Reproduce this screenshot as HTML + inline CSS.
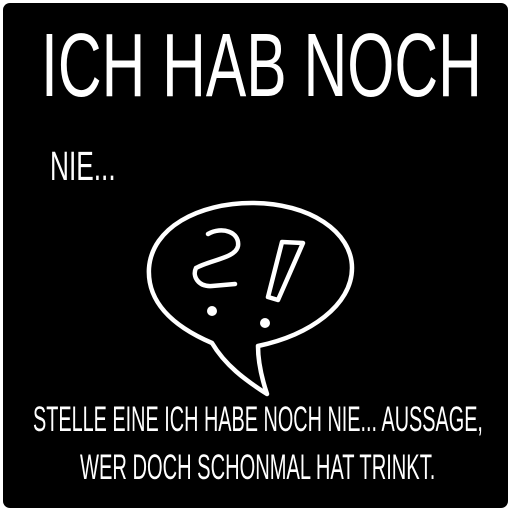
<!DOCTYPE html>
<html><head><style>
html,body{margin:0;padding:0;background:#fff;width:512px;height:512px;overflow:hidden}
.box{position:absolute;left:3px;top:3px;width:505px;height:505px;background:#000;border-radius:7px}
.t{position:absolute;color:#fff;font-family:"Liberation Sans",sans-serif;white-space:nowrap;transform-origin:0 0;line-height:1}
</style></head><body>
<div class="box"></div>
<div class="t" style="left:41px;top:21px;font-size:90px;transform:scaleX(0.673)">ICH HAB NOCH</div>
<div class="t" style="left:50px;top:146px;font-size:41px;transform:scaleX(0.64)">NIE...</div>
<svg style="position:absolute;left:0;top:0" width="512" height="512">
<g fill="none" stroke="#fff" stroke-width="4.5" stroke-linecap="round" stroke-linejoin="round">
<path d="M212 343 C170 325 147 300 149 268 C152 228 198 203 252 203 C310 203 352 232 352 268 C352 305 310 335 258 346 C258 365 263 382 267 394 C245 380 225 365 212 343 Z"/>
<path d="M208 234 C222 226 240 232 238 246 C236 258 210 260 196 268 C192 276 198 287 212 286 L235 284"/>
<path d="M282 242 L303 243 L278 300 L268 297 Z"/>
</g>
<circle cx="212" cy="311" r="5" fill="#fff"/>
<circle cx="265" cy="323" r="5" fill="#fff"/>
</svg>
<div class="t" style="left:33px;top:402px;font-size:35px;transform:scaleX(0.567)">STELLE EINE ICH HABE NOCH NIE... AUSSAGE,</div>
<div class="t" style="left:80px;top:450px;font-size:35px;transform:scaleX(0.574)">WER DOCH SCHONMAL HAT TRINKT.</div>
</body></html>
